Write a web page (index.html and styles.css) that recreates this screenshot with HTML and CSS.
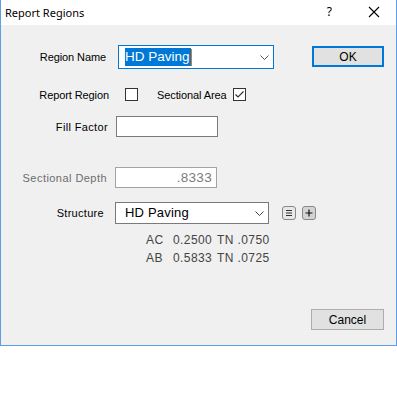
FILE: index.html
```html
<!DOCTYPE html>
<html>
<head>
<meta charset="utf-8">
<link rel="stylesheet" href="styles.css">
</head>
<body>
<div class="window">
  <div class="titlebar">
    <span class="title">Report Regions</span>
    <span class="help">?</span>
    <span class="close"><svg width="12" height="12" viewBox="0 0 12 12"><path d="M1 1 L11 11 M11 1 L1 11" stroke="#000" stroke-width="1.1" fill="none"/></svg></span>
  </div>
  <div class="content">
    <div class="row row1">
      <label class="lbl l1">Region Name</label>
      <div class="combo focus">
        <span class="sel">HD Paving</span><span class="caret"></span>
        <svg class="chev" width="9" height="6" viewBox="0 0 9 6"><path d="M0.5 0.5 L4.5 4.5 L8.5 0.5" stroke="#555" stroke-width="1" fill="none"/></svg>
      </div>
      <button class="btn ok">OK</button>
    </div>
    <div class="row row2">
      <label class="lbl l2">Report Region</label>
      <span class="check c1"></span>
      <label class="lbl2">Sectional Area</label>
      <span class="check c2"><svg width="11" height="11" viewBox="0 0 11 11"><path d="M1.5 5.5 L4 8 L9.5 2.5" stroke="#333" stroke-width="1.2" fill="none"/></svg></span>
    </div>
    <div class="row row3">
      <label class="lbl l3">Fill Factor</label>
      <div class="input"></div>
    </div>
    <div class="row row4">
      <label class="lbl l4 dis">Sectional Depth</label>
      <div class="input disabled">.8333</div>
    </div>
    <div class="row row5">
      <label class="lbl l5">Structure</label>
      <div class="combo plain">
        <span class="val">HD Paving</span>
        <svg class="chev" width="9" height="6" viewBox="0 0 9 6"><path d="M0.5 0.5 L4.5 4.5 L8.5 0.5" stroke="#444" stroke-width="1" fill="none"/></svg>
      </div>
      <span class="mini m1"><svg width="10" height="10" viewBox="0 0 10 10"><path d="M2 2.5 H8 M2 5 H8 M2 7.5 H8" stroke="#333" stroke-width="1" fill="none"/></svg></span>
      <span class="mini m2"><svg width="10" height="10" viewBox="0 0 10 10"><path d="M5 1.5 V8.5 M1.5 5 H8.5" stroke="#111" stroke-width="1.2" fill="none"/></svg></span>
    </div>
    <div class="info">
      <div class="line"><span class="k">AC</span><span class="v">0.2500</span><span class="t">TN .0750</span></div>
      <div class="line"><span class="k">AB</span><span class="v">0.5833</span><span class="t">TN .0725</span></div>
    </div>
    <div class="footer">
      <button class="btn cancel">Cancel</button>
    </div>
  </div>
</div>
</body>
</html>
```

FILE: styles.css
```css
* { box-sizing: border-box; }
html, body { margin: 0; padding: 0; background: #fff; }
body { width: 397px; height: 397px; overflow: hidden; }

.window {
  width: 397px;
  height: 346px;
  border: 1px solid #5c9fe8;
  border-top: none;
  background: #f0f0f0;
  display: flex;
  flex-direction: column;
}
.titlebar {
  height: 25px;
  background: #fff;
  display: flex;
  align-items: center;
  font-family: "Noto Sans", sans-serif;
  font-size: 11px;
  color: #000;
  flex: none;
}
.title { margin-left: 4px; margin-top: -1px; }
.help { margin-left: auto; margin-right: 36px; font-size: 12px; margin-top: -2px; }
.close { width: 12px; height: 12px; margin-right: 16px; display: flex; margin-top: -1px; }

.content {
  flex: 1;
  font-family: "Liberation Sans", Arial, sans-serif;
  font-size: 11px;
  color: #000;
  display: flex;
  flex-direction: column;
}
.row { display: flex; align-items: center; }
.lbl { text-align: right; flex: none; white-space: nowrap; }
.dis { color: #6d6d6d; }

.row1 { margin-top: 20px; height: 24px; }
.l1 { width: 105px; letter-spacing: -0.1px; }
.combo {
  position: relative;
  display: flex;
  align-items: center;
  background: #fff;
  flex: none;
}
.combo.focus {
  width: 156px; height: 24px;
  margin-left: 12px;
  border: 1px solid #0078d7;
  font-size: 13.5px;
}
.sel {
  background: #0078d7;
  color: #fff;
  margin-left: 6px;
  padding: 1px 1px 1px 0;
  line-height: 16px;
}
.caret { width: 1px; height: 17px; background: #e8760f; }
.chev { position: absolute; right: 4px; top: 50%; margin-top: -2px; }
.btn {
  font-family: "Liberation Sans", Arial, sans-serif;
  font-size: 12px;
  color: #000;
  background: #e1e1e1;
  padding: 0;
  flex: none;
}
.ok {
  width: 72px; height: 21px;
  margin-left: 38px;
  border: 2px solid #0078d7;
  align-self: flex-start;
  margin-top: 1px;
}

.row2 { margin-top: 19px; height: 13px; }
.l2 { width: 108px; letter-spacing: -0.1px; }
.check {
  width: 13px; height: 13px;
  border: 1px solid #333;
  background: #fff;
  flex: none;
  display: flex; align-items: center; justify-content: center;
}
.c1 { margin-left: 16px; }
.lbl2 { margin-left: 19px; width: 69px; white-space: nowrap; letter-spacing: -0.1px; }
.c2 { margin-left: 7px; }

.row3 { margin-top: 15px; height: 21px; }
.l3 { width: 107px; letter-spacing: 0.35px; }
.input {
  width: 102px; height: 21px;
  border: 1px solid #7a7a7a;
  background: #fff;
  margin-left: 8px;
  flex: none;
}
.input.disabled {
  border-color: #a3a3a3;
  background: #fff;
  color: #7b7b7b;
  font-size: 13.5px;
  letter-spacing: 0.3px;
  text-align: right;
  padding-right: 4px;
  line-height: 19px;
}

.row4 { margin-top: 30px; height: 21px; }
.l4 { width: 106px; letter-spacing: 0.45px; }

.row5 { margin-top: 14px; height: 21px; }
.l5 { width: 103px; letter-spacing: 0.3px; }
.combo.plain {
  width: 154px; height: 22px;
  margin-left: 11px;
  border: 1px solid #7a7a7a;
  font-size: 13px;
  letter-spacing: 0.2px;
}
.val { margin-left: 9px; }
.mini {
  width: 14px; height: 14px;
  border: 1px solid #888;
  border-radius: 3px;
  flex: none;
  display: flex; align-items: center; justify-content: center;
}
.m1 { margin-left: 13px; background: #e8e8e8; }
.m2 { margin-left: 6px; background: #d4d4d4; }

.info { margin-left: 145px; margin-top: 8px; font-size: 12px; color: #444; letter-spacing: 0.4px; }
.line { display: flex; height: 18px; align-items: center; }
.k { width: 27px; }
.v { width: 44px; }

.footer { margin-top: auto; display: flex; justify-content: flex-end; padding-right: 12px; margin-bottom: 15px; }
.cancel {
  width: 73px; height: 21px;
  border: 1px solid #adadad;
}
```
